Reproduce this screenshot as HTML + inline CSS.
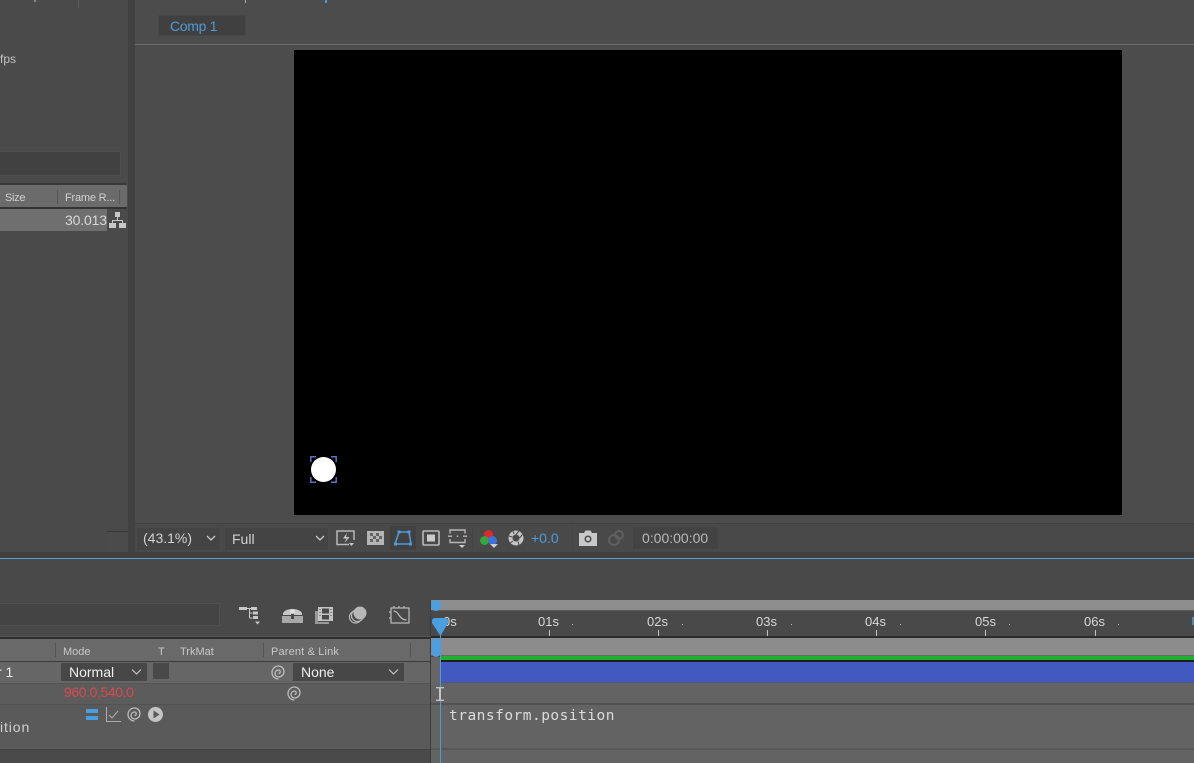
<!DOCTYPE html>
<html><head><meta charset="utf-8"><style>
html,body{margin:0;padding:0;background:#454545}
#r{position:relative;width:1194px;height:763px;overflow:hidden;background:#454545;font-family:"Liberation Sans",sans-serif;color:#ccc}
#r div,#r span.t{position:absolute}
.t{white-space:nowrap;position:absolute}
svg{position:absolute;overflow:visible}
</style></head><body><div id="r">
<!-- left project panel -->
<div style="left:0;top:0;width:128px;height:552px;background:#4a4a4a"></div>
<div style="left:78px;top:0;width:1px;height:8px;background:#5c5c5c"></div>
<div style="left:34px;top:0;width:2px;height:2px;background:#888"></div>
<div class="t" style="left:0;top:52px;font-size:12px;color:#c4c4c4">fps</div>
<div style="left:0;top:151px;width:121px;height:25px;background:#414141;border:1px solid #4f4f4f;border-left:0;box-sizing:border-box"></div>
<div style="left:0;top:183px;width:127px;height:2px;background:#3a3a3a"></div>
<div style="left:0;top:185px;width:127px;height:22px;background:#6b6b6b"></div>
<div style="left:0;top:207px;width:127px;height:2px;background:#333"></div>
<div style="left:57px;top:190px;width:1px;height:14px;background:#555"></div>
<div style="left:119px;top:190px;width:1px;height:14px;background:#555"></div>
<div class="t" style="left:5px;top:192px;font-size:11px;color:#d0d0d0;letter-spacing:-.3px">Size</div>
<div class="t" style="left:65px;top:192px;font-size:11px;color:#d0d0d0;letter-spacing:-.2px">Frame R...</div>
<div style="left:0;top:209px;width:107px;height:22px;background:#6f6f6f"></div>
<div class="t" style="left:65px;top:212px;font-size:14px;color:#d8d8d8;letter-spacing:-.15px">30.013</div>
<svg style="left:109px;top:212px" width="17" height="16" viewBox="0 0 17 16"><path d="M6 0h5v5H6zM0 11h7v5H0zM10 11h7v5h-7z" fill="#c8c8c8"/><path d="M8.500 5v3M3.500 11V8.500h10V11" stroke="#c8c8c8" fill="none"/></svg>
<div style="left:107px;top:531px;width:21px;height:21px;background:#4b4b4b;border-top:1px solid #3a3a3a;box-sizing:border-box"></div>
<!-- gutter -->
<div style="left:128px;top:0;width:7px;height:552px;background:#414141"></div>
<!-- viewer panel -->
<div style="left:135px;top:0;width:1059px;height:552px;background:#4c4c4c"></div>
<div style="left:245px;top:0;width:1px;height:3px;background:#aaa"></div>
<div style="left:325px;top:0;width:2px;height:3px;background:#4a9bdc"></div>
<div style="left:158px;top:15px;width:88px;height:21px;background:#404040;border:1px solid #474747;box-sizing:border-box"></div>
<div class="t" style="left:170px;top:18px;font-size:14px;color:#4f9bd9;letter-spacing:-.3px">Comp 1</div>
<div style="left:135px;top:44px;width:1059px;height:1px;background:#6e6e6e"></div>
<div style="left:294px;top:50px;width:828px;height:465px;background:#000"></div>
<div style="left:311px;top:457px;width:25px;height:25px;border-radius:50%;background:#fff"></div>
<svg style="left:310px;top:456px" width="27" height="27" viewBox="0 0 27 27" fill="none" stroke="#5c70c4" stroke-width="1.500"><path d="M.8 6V.8H6M21 .8h5.200V6M.8 21v5.200H6M21 26.200h5.200V21"/></svg>
<!-- toolbar -->
<div style="left:135px;top:523px;width:1059px;height:29px;background:#494949;border-top:1px solid #414141;box-sizing:border-box"></div>
<div style="left:136px;top:527px;width:85px;height:24px;background:#444;border:1px solid #4b4b4b;box-sizing:border-box"></div>
<div class="t" style="left:143px;top:530px;font-size:14px;color:#d0d0d0">(43.1%)</div>
<svg style="left:206px;top:535px" width="10" height="6" fill="none" stroke="#c8c8c8" stroke-width="1.300"><path d="M1 1l4 4 4-4"/></svg>
<div style="left:224px;top:527px;width:105px;height:24px;background:#444;border:1px solid #4b4b4b;box-sizing:border-box"></div>
<div class="t" style="left:232px;top:531px;font-size:14px;color:#d0d0d0">Full</div>
<svg style="left:315px;top:535px" width="10" height="6" fill="none" stroke="#c8c8c8" stroke-width="1.300"><path d="M1 1l4 4 4-4"/></svg>
<svg style="left:336px;top:530px" width="19" height="17" viewBox="0 0 19 17" fill="none" stroke="#b8b8b8" stroke-width="1.500"><path d="M13 14.500H1V1h17v9"/><path d="M11 3L7 8.500h3.500L8.500 13l5-6H10z" fill="#c8c8c8" stroke="none"/><path d="M13 13h5l-2.500 3z" fill="#c8c8c8" stroke="none"/></svg>
<svg style="left:367px;top:531px" width="17" height="14" viewBox="0 0 17 14"><rect width="17" height="14" fill="#b4b4b4"/><path d="M3 2h3v3H3zM9 2h3v3H9zM6 5h3v3H6zM12 5h3v3h-3zM3 8h3v3H3zM9 8h3v3H9z" fill="#666"/></svg>
<div style="left:390px;top:526px;width:26px;height:24px;background:#414141"></div>
<svg style="left:394px;top:530px" width="18" height="16" viewBox="0 0 18 16" fill="none" stroke="#4f9bd9" stroke-width="1.500"><path d="M5 2h10l2 12H1z"/><g fill="#4f9bd9" stroke="none"><rect x="3.500" y=".5" width="3" height="3"/><rect x="13.500" y=".5" width="3" height="3"/><rect y="12.500" width="3" height="3"/><rect x="15" y="12.500" width="3" height="3"/></g></svg>
<svg style="left:422px;top:530px" width="18" height="16" viewBox="0 0 18 16"><rect x="1" y="1" width="16" height="14" rx="1" fill="none" stroke="#bbb" stroke-width="1.600"/><rect x="5" y="4.500" width="8" height="7" fill="#ccc"/></svg>
<svg style="left:448px;top:529px" width="20" height="20" viewBox="0 0 20 20" fill="none" stroke="#b8b8b8" stroke-width="1.400"><path d="M2 4.500V1h15v3.500M2 10v3.500h15V10M0 7.200h4M15 7.200h4M9.500 6.500v1.500"/><path d="M11 16h6l-3 3z" fill="#ccc" stroke="none"/></svg>
<div style="left:472px;top:528px;width:1px;height:22px;background:#444"></div>
<div style="left:484px;top:530px;width:9px;height:9px;border-radius:50%;background:#e02a2a"></div>
<div style="left:480px;top:536px;width:9px;height:9px;border-radius:50%;background:#35a83a"></div>
<div style="left:488px;top:536px;width:9px;height:9px;border-radius:50%;background:#3f6fd8"></div>
<svg style="left:490px;top:544px" width="8" height="4"><path d="M0 0h8L4 4z" fill="#ccc"/></svg>
<svg style="left:508px;top:530px" width="16" height="16" viewBox="0 0 16 16"><circle cx="8" cy="8" r="5.500" fill="none" stroke="#c4c4c4" stroke-width="4"/><path d="M8 4.500L11 1M11.500 8l3-3.500M10 11.500l1 3.500M5 11l-3 2M4.500 7L1 6M6 4L5 1" stroke="#494949" stroke-width="1"/></svg>
<div class="t" style="left:531px;top:530px;font-size:14px;color:#4f9bd9">+0.0</div>
<div style="left:572px;top:526px;width:1px;height:24px;background:#444"></div>
<svg style="left:579px;top:530px" width="18" height="16" viewBox="0 0 18 16"><path d="M0 3h5l1.500-2.500h5L13 3h5v13H0z" fill="#c8c8c8"/><circle cx="9" cy="9" r="3.500" fill="#494949"/><circle cx="9" cy="9" r="2" fill="#c8c8c8"/></svg>
<svg style="left:607px;top:529px" width="18" height="17" viewBox="0 0 18 17" fill="none" stroke="#5f5f5f" stroke-width="2"><circle cx="7" cy="11" r="5"/><circle cx="12" cy="6" r="4"/></svg>
<div style="left:632px;top:526px;width:87px;height:24px;background:#434343;border:1px solid #4a4a4a;box-sizing:border-box"></div>
<div class="t" style="left:642px;top:530px;font-size:14px;color:#b8b8b8">0:00:00:00</div>
<!-- divider -->
<div style="left:0;top:552px;width:1194px;height:6px;background:#404040"></div>
<div style="left:0;top:558px;width:1194px;height:1px;background:#5d9bcb"></div>
<!-- timeline -->
<div style="left:0;top:559px;width:1194px;height:79px;background:#494949"></div>
<div style="left:0;top:603px;width:220px;height:23px;background:#444;border:1px solid #505050;border-left:0;box-sizing:border-box"></div>
<div style="left:0;top:636px;width:430px;height:1px;background:#585858"></div>
<svg style="left:239px;top:606px" width="22" height="20" viewBox="0 0 22 20" fill="none" stroke="#c8c8c8"><path d="M0 2.500h8" stroke-width="3"/><path d="M7 2.500h5M10.500 2.500v9.500M10.500 7h3M10.500 12h3"/><path d="M12 1h6v3h-6zM14 5.500h5v3h-5zM14 10h5v3h-5z" fill="#c8c8c8" stroke="none"/><path d="M16 15.500h5l-2.500 3z" fill="#c8c8c8" stroke="none"/></svg>
<svg style="left:282px;top:607px" width="21" height="16" viewBox="0 0 21 16"><rect y="9" width="21" height="7" fill="#a8a8a8"/><path d="M1 7a9.500 5 0 0 1 19 0v1H1z" fill="#c8c8c8"/><rect x="9" y="3" width="3" height="9" fill="#4a4a4a"/><circle cx="10.500" cy="4.500" r="2.500" fill="#e0e0e0"/></svg>
<svg style="left:315px;top:606px" width="19" height="18" viewBox="0 0 19 18"><path d="M0 5h3v11h11v2H0z" fill="#999"/><rect x="3" y="1" width="15" height="14" fill="#c4c4c4"/><path d="M7 2.500h7v5H7zM7 9h7v4.500H7z" fill="#4a4a4a"/><path d="M4.500 3h1v1h-1zM4.500 6h1v1h-1zM4.500 9h1v1h-1zM15.500 3h1v1h-1zM15.500 6h1v1h-1zM15.500 9h1v1h-1z" fill="#4a4a4a"/></svg>
<svg style="left:348px;top:605px" width="20" height="20" viewBox="0 0 20 20"><circle cx="7.500" cy="12" r="6" fill="none" stroke="#bbb" stroke-width="1.200"/><circle cx="9.500" cy="10.500" r="6" fill="#4a4a4a" stroke="#bbb" stroke-width="1.200"/><circle cx="12" cy="8" r="6.500" fill="#b8b8b8"/></svg>
<svg style="left:389px;top:605px" width="22" height="20" viewBox="0 0 22 20" fill="none" stroke="#bdbdbd" stroke-width="1.200"><rect x="2" y="3" width="18" height="15"/><path d="M5 1v2M10 1v2M15 1v2M0 7h2M0 13h2"/><path d="M4.500 6C10 6 10 15 17.500 15"/></svg>
<!-- column header -->
<div style="left:0;top:637px;width:430px;height:2px;background:#2e2e2e"></div>
<div style="left:0;top:639px;width:430px;height:22px;background:#696969"></div>
<div style="left:0;top:661px;width:430px;height:1px;background:#3c3c3c"></div>
<div style="left:55px;top:643px;width:1px;height:14px;background:#555"></div>
<div style="left:263px;top:643px;width:1px;height:14px;background:#555"></div>
<div style="left:410px;top:643px;width:1px;height:14px;background:#555"></div>
<div class="t" style="left:63px;top:646px;font-size:11px;color:#c8c8c8">Mode</div>
<div class="t" style="left:158px;top:646px;font-size:11px;color:#c8c8c8">T</div>
<div class="t" style="left:180px;top:646px;font-size:11px;color:#c8c8c8">TrkMat</div>
<div class="t" style="left:271px;top:646px;font-size:11px;color:#c8c8c8;letter-spacing:.15px">Parent &amp; Link</div>
<!-- rows left -->
<div style="left:0;top:662px;width:430px;height:21px;background:#666"></div>
<div style="left:0;top:683px;width:430px;height:1px;background:#555"></div>
<div style="left:0;top:684px;width:430px;height:20px;background:#5c5c5c"></div>
<div style="left:0;top:704px;width:430px;height:1px;background:#515151"></div>
<div style="left:0;top:705px;width:430px;height:44px;background:#5a5a5a"></div>
<div style="left:0;top:749px;width:430px;height:14px;background:#4a4a4a;border-top:1px solid #444;box-sizing:border-box"></div>
<div class="t" style="left:-3px;top:664px;font-size:14px;color:#eee">r 1</div>
<div style="left:61px;top:663px;width:86px;height:18px;background:#474747"></div>
<div class="t" style="left:69px;top:664px;font-size:14px;color:#eee">Normal</div>
<svg style="left:131px;top:669px" width="11" height="6" fill="none" stroke="#ccc" stroke-width="1.100"><path d="M1 .5l4.500 4.500L10 .5"/></svg>
<div style="left:153px;top:663px;width:16px;height:16px;background:#494949"></div>
<svg style="left:271px;top:665px" width="15" height="15" viewBox="0 0 15 15" fill="none" stroke="#bcbcbc" stroke-width="1.300"><path d="M7.500 14A6.500 6.500 0 0 1 7.500 1A5.500 5.500 0 0 1 7.500 12A3.500 3.500 0 0 1 7.500 5A1.750 1.750 0 0 1 7.500 8.500"/></svg>
<div style="left:293px;top:663px;width:111px;height:18px;background:#474747"></div>
<div class="t" style="left:301px;top:664px;font-size:14px;color:#eee">None</div>
<svg style="left:388px;top:669px" width="11" height="6" fill="none" stroke="#ccc" stroke-width="1.100"><path d="M1 .5l4.500 4.500L10 .5"/></svg>
<div class="t" style="left:64px;top:684px;font-size:14px;color:#d9484d;letter-spacing:-.4px">960.0,540.0</div>
<svg style="left:287px;top:686px" width="15" height="15" viewBox="0 0 15 15" fill="none" stroke="#bcbcbc" stroke-width="1.300"><path d="M7.500 14A6.500 6.500 0 0 1 7.500 1A5.500 5.500 0 0 1 7.500 12A3.500 3.500 0 0 1 7.500 5A1.750 1.750 0 0 1 7.500 8.500"/></svg>
<div style="left:86px;top:709px;width:12px;height:4px;background:#4a9fe0"></div>
<div style="left:86px;top:716px;width:12px;height:4px;background:#4a9fe0"></div>
<svg style="left:106px;top:707px" width="15" height="15" viewBox="0 0 15 15" fill="none" stroke="#aaa" stroke-width="1.100"><path d="M.5 0v14.500H15"/><path d="M3 8l3 3 6-7"/></svg>
<svg style="left:127px;top:707px" width="15" height="15" viewBox="0 0 15 15" fill="none" stroke="#bcbcbc" stroke-width="1.300"><path d="M7.500 14A6.500 6.500 0 0 1 7.500 1A5.500 5.500 0 0 1 7.500 12A3.500 3.500 0 0 1 7.500 5A1.750 1.750 0 0 1 7.500 8.500"/></svg>
<svg style="left:148px;top:707px" width="15" height="15" viewBox="0 0 15 15"><circle cx="7.500" cy="7.500" r="7.500" fill="#c4c4c4"/><path d="M5.500 3.500l6 4-6 4z" fill="#5a5a5a"/></svg>
<div class="t" style="left:0;top:719px;font-size:14px;color:#d0d0d0;letter-spacing:.9px">ition</div>
<!-- timeline right -->
<div style="left:430px;top:600px;width:1px;height:163px;background:#3c3c3c"></div>
<div style="left:431px;top:600px;width:763px;height:11px;background:#8d8d8d;border-bottom:1px solid #5a5a5a;box-sizing:border-box"></div>
<div style="left:431px;top:600px;width:10px;height:11px;border-radius:5px;background:#4a9fe0"></div>
<div style="left:431px;top:611px;width:763px;height:26px;background:#494949"></div>
<div class="t" style="left:443px;top:614px;font-size:13px;color:#d8d8d8">0s</div>
<div class="t" style="left:538px;top:614px;font-size:13px;color:#d8d8d8">01s</div>
<div class="t" style="left:647px;top:614px;font-size:13px;color:#d8d8d8">02s</div>
<div class="t" style="left:756px;top:614px;font-size:13px;color:#d8d8d8">03s</div>
<div class="t" style="left:865px;top:614px;font-size:13px;color:#d8d8d8">04s</div>
<div class="t" style="left:975px;top:614px;font-size:13px;color:#d8d8d8">05s</div>
<div class="t" style="left:1084px;top:614px;font-size:13px;color:#d8d8d8">06s</div>
<div style="left:1192px;top:617px;width:2px;height:8px;background:#4f86b0"></div>
<svg style="left:431px;top:630px" width="763" height="7" fill="none" stroke="#c0c0c0"><path d="M118.500 0v6M227.500 0v6M336.500 0v6M445.500 0v6M554.500 0v6M664.500 0v6"/></svg>
<svg style="left:431px;top:624px" width="763" height="2"><g fill="#bbb"><rect x="141" width="1" height="1"/><rect x="251" width="1" height="1"/><rect x="360" width="1" height="1"/><rect x="469" width="1" height="1"/><rect x="578" width="1" height="1"/><rect x="687" width="1" height="1"/></g></svg>
<div style="left:431px;top:636px;width:763px;height:2px;background:#2a2a2a"></div>
<div style="left:431px;top:638px;width:763px;height:18px;background:#8c8c8c;border-bottom:1px solid #6a6a6a;box-sizing:border-box"></div>
<div style="left:432px;top:638px;width:8px;height:19px;border-radius:4px;background:#4a9fe0"></div>
<div style="left:440px;top:656px;width:754px;height:5px;background:#1fb030"></div>
<div style="left:440px;top:660px;width:754px;height:2px;background:#1d1d1d"></div>
<div style="left:440px;top:662px;width:754px;height:21px;background:#4259bf;border-bottom:1px solid #4a5585;box-sizing:border-box"></div>
<div style="left:431px;top:657px;width:9px;height:26px;background:#666"></div>
<div style="left:431px;top:683px;width:763px;height:20px;background:#636363"></div>
<div style="left:431px;top:703px;width:763px;height:2px;background:#535353"></div>
<div style="left:431px;top:705px;width:763px;height:43px;background:#636363"></div>
<div style="left:431px;top:748px;width:763px;height:2px;background:#575757"></div>
<div style="left:431px;top:750px;width:763px;height:13px;background:#636363"></div>
<div class="t" style="left:449px;top:708px;font-family:'DejaVu Sans Mono','Liberation Mono',monospace;font-size:14.500px;letter-spacing:.49px;color:#dcdcdc">transform.position</div>
<!-- playhead -->
<div style="left:440px;top:622px;width:1px;height:141px;background:#4f9bd9"></div>
<svg style="left:432px;top:618px" width="16" height="18"><path d="M0 3q0-3 3-3h10q3 0 3 3v2L8.500 18 0 5z" fill="#4a9fe0"/></svg>
<svg style="left:435px;top:687px" width="11" height="15" fill="none" stroke="#c4c4c4" stroke-width="1.300"><path d="M1 .7h8M1 13.300h8"/><path d="M5 .7v12.600" stroke-width="2"/></svg>
</div></body></html>
